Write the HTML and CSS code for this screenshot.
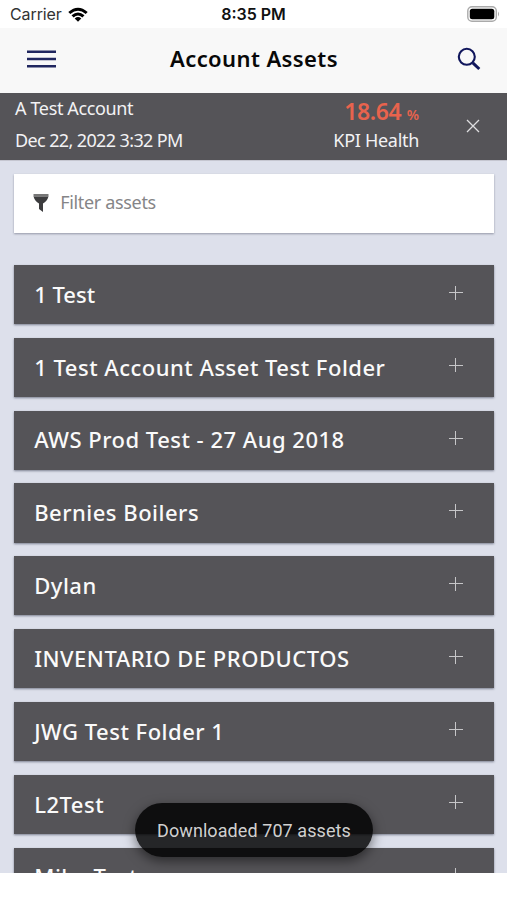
FILE: index.html
```html
<!DOCTYPE html>
<html lang="en">
<head>
<meta charset="utf-8">
<title>Account Assets</title>
<link rel="stylesheet" href="styles.css">
</head>
<body>
<div class="screen">
  <div class="statusbar">
    <div class="carrier"><span class="carrier-name">Carrier</span>
      <svg class="wifi" viewBox="0 0 20 15" width="20" height="15"><path d="M0.3 4.9Q10-3.6 19.7 4.9L17.7 7Q10 .7 2.3 7Z"/><path d="M3.5 8.3Q10 2.6 16.5 8.3L14.4 10.4Q10 6.8 5.6 10.4Z"/><path d="M6.7 11.5Q10 8.6 13.3 11.5L10 14.8Z"/></svg>
    </div>
    <span class="clock">8:35 PM</span>
    <svg class="battery" viewBox="0 0 33 16" width="33" height="16"><rect x=".8" y=".8" width="28.5" height="14.4" rx="4.2" fill="none" stroke="#aaa" stroke-width="1.4"/><rect x="2.8" y="2.8" width="24.5" height="10.4" rx="2.5"/><path d="M31 5.5Q33 8 31 10.5Z" fill="#aaa"/></svg>
  </div>
  <header class="navbar">
    <svg class="menu" viewBox="0 0 29 18" width="29" height="18"><path d="M0 1.8H29M0 9H29M0 16.2H29"/></svg>
    <h1 class="title">Account Assets</h1>
    <svg class="search" viewBox="0 0 24 24" width="24" height="24"><circle cx="9.8" cy="9.8" r="8"/><path class="handle" d="M15.8 15.8L22.3 22"/></svg>
  </header>
  <section class="account">
    <div class="account-info"><span class="account-name">A Test Account</span><span class="account-date">Dec 22, 2022 3:32 PM</span></div>
    <div class="kpi"><span class="kpi-value">18.64 <span class="kpi-unit">%</span></span><span class="kpi-label">KPI Health</span></div>
    <svg class="close" viewBox="0 0 14 14" width="14" height="14"><path d="M1 1L13 13M13 1L1 13"/></svg>
  </section>
  <main class="content">
    <div class="filter">
      <svg class="funnel" viewBox="0 0 16 18" width="16" height="18"><path d="M.5 0H15.5V2.5H.5Z" fill="#777"/><path d="M.5 2.5H15.5Q14 7.5 10 9.5V18L6 15V9.5Q2 7.5 .5 2.5Z"/></svg>
      <span class="placeholder">Filter assets</span>
    </div>
    <ul class="assets">
      <li class="asset"><span class="label tight">1 Test</span><i class="plus"></i></li>
      <li class="asset"><span class="label">1 Test Account Asset Test Folder</span><i class="plus"></i></li>
      <li class="asset"><span class="label">AWS Prod Test - 27 Aug 2018</span><i class="plus"></i></li>
      <li class="asset"><span class="label">Bernies Boilers</span><i class="plus"></i></li>
      <li class="asset"><span class="label">Dylan</span><i class="plus"></i></li>
      <li class="asset"><span class="label">INVENTARIO DE PRODUCTOS</span><i class="plus"></i></li>
      <li class="asset"><span class="label">JWG Test Folder 1</span><i class="plus"></i></li>
      <li class="asset"><span class="label">L2Test</span><i class="plus"></i></li>
      <li class="asset"><span class="label">Mike Tests</span><i class="plus"></i></li>
    </ul>
  </main>
  <div class="toast">Downloaded 707 assets</div>
</div>
</body>
</html>
```
FILE: styles.css
```css
* { box-sizing: border-box; }
body { margin: 0; background: #fff; font-family: "Noto Sans", "Open Sans", sans-serif; }
.screen { position: relative; width: 507px; height: 900px; overflow: hidden; display: flex; flex-direction: column; }
.statusbar { height: 28px; flex: none; display: grid; grid-template-columns: 1fr auto 1fr; align-items: center; padding: 0 7px 0 10px; font-family: Inter, sans-serif; font-size: 16px; color: #111; }
.carrier { display: flex; align-items: center; gap: 6px; color: #333; }
.carrier-name { letter-spacing: -.1px; }
.wifi { fill: #000; }
.clock { font-weight: 600; margin-right: 3px; }
.battery { justify-self: end; }
.navbar { height: 65px; flex: none; background: #f8f8f8; display: flex; align-items: center; justify-content: space-between; padding: 0 26px 3px 27px; }
.menu { fill: none; stroke: #20265f; stroke-width: 2.6; }
.search { fill: none; stroke: #10165c; stroke-width: 2.1; }
.handle { stroke-width: 3; }
.title { margin: 0 5px 2px 0; font-size: 22px; font-weight: 600; color: #080808; letter-spacing: .4px; }
.account { height: 67px; flex: none; background: #555458; color: #f2f2f4; display: flex; padding: 0 27px 0 15px; font-size: 18px; line-height: 32px; }
.account-info, .kpi { display: flex; flex-direction: column; align-items: flex-start; }
.account-info { margin-top: -1px; }
.account-name { letter-spacing: -.36px; }
.account-date { letter-spacing: -.62px; }
.kpi { margin-left: auto; align-items: flex-end; }
.kpi-value { height: 31px; padding-top: 2px; line-height: 32px; color: #e8634d; font-size: 23px; font-weight: 600; letter-spacing: -.4px; }
.kpi-unit { font-size: 14px; letter-spacing: 0; line-height: 1; }
.kpi-label { letter-spacing: -.3px; }
.close { margin: 26px 0 0 47px; fill: none; stroke: #dedee0; stroke-width: 1.3; }
.content { height: 713px; flex: none; overflow: hidden; background: #dde0eb; padding: 12.5px 13.5px 0 14.2px; border-top: 1px solid #c5c6d0; }
.filter { height: 59.5px; background: #fff; display: flex; align-items: center; gap: 11px; padding-left: 19px; box-shadow: 0 1px 2px rgba(60,65,85,.45); }
.funnel { fill: #3c3c3e; }
.placeholder { margin-bottom: 2px; font-size: 18px; color: #858587; letter-spacing: -.33px; }
.assets { list-style: none; margin: 32px 0 0; padding: 0; display: grid; gap: 13.63px; }
.asset { height: 59.2px; background: #555458; color: #fafafa; display: flex; align-items: center; justify-content: space-between; padding: 0 31px 0 20px; box-shadow: 0 1px 2px rgba(60,65,85,.6); }
.label { margin-bottom: 1.5px; font-size: 22px; font-weight: 500; letter-spacing: .5px; }
.tight { letter-spacing: 0; }
.plus { width: 14px; height: 14px; margin-bottom: 4px; background: linear-gradient(#c6c6c8,#c6c6c8) center/100% 1.3px no-repeat, linear-gradient(#c6c6c8,#c6c6c8) center/1.3px 100% no-repeat; }
.toast { position: absolute; left: 135px; top: 803px; width: 238px; height: 54px; border-radius: 27px; background: rgba(0,0,0,.83); display: flex; align-items: center; justify-content: center; font-family: Roboto, sans-serif; font-size: 18px; letter-spacing: .08px; color: #d0d0d0; box-shadow: 0 4px 12px rgba(0,0,0,.5); }
```
